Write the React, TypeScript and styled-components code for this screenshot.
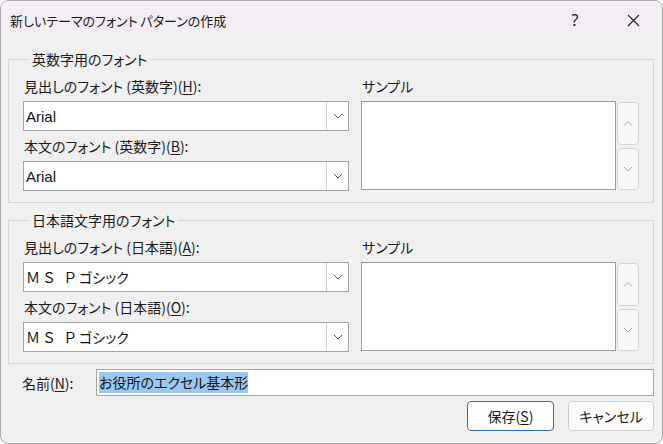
import React from 'react';
import styled, { createGlobalStyle } from 'styled-components';

const JP = '"Noto Sans CJK JP", "Noto Sans", sans-serif';

const GlobalStyle = createGlobalStyle`
	html, body {
		margin: 0;
		padding: 0;
		background: #ffffff;
	}
	body {
		font-family: ${JP};
		color: #1b1b1b;
	}
	* {
		box-sizing: border-box;
	}
`;

const Dialog = styled.div`
	width: 663px;
	height: 444px;
	display: flex;
	flex-direction: column;
	background: #f0f0f0;
	border: 1px solid #a9a9a9;
	border-radius: 8px;
	overflow: hidden;
	font-family: ${JP};
	font-feature-settings: "palt";
`;

const TitleBar = styled.div`
	height: 38px;
	flex: none;
	display: flex;
	align-items: center;
	padding-left: 9px;
	background: #f3eef4;
`;

const Title = styled.div`
	flex: 1;
	font-size: 13px;
	color: #1a1a1a;
`;

const TitleButton = styled.div`
	width: 58px;
	height: 38px;
	display: flex;
	align-items: center;
	justify-content: center;
	font-family: "Noto Sans", sans-serif;
	font-size: 16px;
	color: #222;
`;

const Body = styled.div`
	flex: 1;
	display: flex;
	flex-direction: column;
	padding: 10px 8px 0 7px;
`;

const Group = styled.fieldset<{ $gap?: number }>`
	margin: ${p => p.$gap || 0}px 0 0 0;
	padding: 7px 13px 11px 14px;
	border: 1px solid #d6d6d6;
	border-radius: 0;
	min-inline-size: auto;
`;

const Legend = styled.legend`
	margin-left: 6px;
	padding: 0 3px;
	font-size: 14px;
	line-height: 20px;
	height: 20px;
`;

const GroupGrid = styled.div`
	display: grid;
	grid-template-columns: 326px 278px;
	column-gap: 12px;
`;

const Column = styled.div`
	display: flex;
	flex-direction: column;
`;

const FieldLabel = styled.div<{ $top?: number }>`
	font-size: 14px;
	line-height: 20px;
	height: 20px;
	margin-top: ${p => p.$top || 0}px;
	margin-bottom: 5px;
	padding-left: 1px;
	white-space: nowrap;
`;

const Key = styled.span`
	text-decoration: underline;
	text-underline-offset: 2px;
	text-decoration-thickness: 1px;
`;

const Combo = styled.div`
	height: 30px;
	display: flex;
	align-items: stretch;
	background: #fff;
	border: 1px solid #a3a3a3;
`;

const ComboValue = styled.div<{ $latin?: boolean }>`
	flex: 1;
	display: flex;
	align-items: center;
	padding-left: 2px;
	font-family: ${p => (p.$latin ? '"Liberation Sans", Arial, sans-serif' : JP)};
	font-size: ${p => (p.$latin ? 15 : 14)}px;
	color: #111;
`;

const Wide = styled.span`
	font-feature-settings: normal;
	letter-spacing: 2px;
`;

const DropButton = styled.div`
	width: 22px;
	display: flex;
	align-items: center;
	justify-content: center;
	background: #fff;
	border-left: 1px solid #cfcfcf;
`;

const SampleRow = styled.div`
	display: flex;
	gap: 1px;
	height: 89px;
`;

const SampleBox = styled.div`
	width: 255px;
	height: 89px;
	background: #fff;
	border: 1px solid #9c9c9c;
`;

const Spin = styled.div`
	width: 22px;
	display: flex;
	flex-direction: column;
	gap: 3px;
	margin-top: 1px;
`;

const SpinButton = styled.div`
	flex: 1;
	display: flex;
	align-items: center;
	justify-content: center;
	background: #f7f7f7;
	border: 1px solid #d4d4d4;
	border-radius: 4px;
`;

const NameRow = styled.div`
	display: flex;
	align-items: center;
	margin-top: 5px;
	height: 27px;
`;

const NameLabel = styled.div`
	width: 88px;
	padding-left: 14px;
	font-size: 14px;
	white-space: nowrap;
`;

const NameInput = styled.div`
	flex: 1;
	height: 27px;
	display: flex;
	align-items: center;
	padding-left: 2px;
	background: #fff;
	border: 1px solid #a6a6a6;
	font-size: 14px;
`;

const Selected = styled.span`
	background: #99c9ef;
	line-height: 21px;
	color: #111;
`;

const Buttons = styled.div`
	display: flex;
	justify-content: flex-end;
	gap: 14px;
	margin-top: 5px;
`;

const Button = styled.div<{ $primary?: boolean; $w: number }>`
	width: ${p => p.$w}px;
	height: 30px;
	display: flex;
	align-items: center;
	justify-content: center;
	font-size: 14px;
	background: #fdfdfd;
	border: 1px solid ${p => (p.$primary ? '#2a6fb5' : '#d0d0d0')};
	border-radius: 4px;
	color: #1a1a1a;
`;

const Chevron = ({ up, color = '#5a5a5a' }: { up?: boolean; color?: string }) => (
	<svg width="10" height="6" viewBox="0 0 10 6">
		<path
			d={up ? 'M1 5.5 L5 1.5 L9 5.5' : 'M1 1 L5 5 L9 1'}
			fill="none"
			stroke={color}
			strokeWidth="1"
		/>
	</svg>
);

const CloseIcon = () => (
	<svg width="13" height="13" viewBox="0 0 13 13">
		<path d="M1 1 L12 12 M12 1 L1 12" stroke="#222" strokeWidth="1.1" />
	</svg>
);

type FontGroupProps = {
	title: string;
	gap?: number;
	headLabel: React.ReactNode;
	bodyLabel: React.ReactNode;
	headFont: React.ReactNode;
	bodyFont: React.ReactNode;
	latin?: boolean;
};

const FontGroup = ({ title, gap, headLabel, bodyLabel, headFont, bodyFont, latin }: FontGroupProps) => (
	<Group $gap={gap}>
		<Legend>{title}</Legend>
		<GroupGrid>
			<Column>
				<FieldLabel>{headLabel}</FieldLabel>
				<Combo>
					<ComboValue $latin={latin}>{headFont}</ComboValue>
					<DropButton><Chevron /></DropButton>
				</Combo>
				<FieldLabel $top={5}>{bodyLabel}</FieldLabel>
				<Combo>
					<ComboValue $latin={latin}>{bodyFont}</ComboValue>
					<DropButton><Chevron /></DropButton>
				</Combo>
			</Column>
			<Column>
				<FieldLabel>サンプル</FieldLabel>
				<SampleRow>
					<SampleBox />
					<Spin>
						<SpinButton><Chevron up color="#a8a8a8" /></SpinButton>
						<SpinButton><Chevron color="#a8a8a8" /></SpinButton>
					</Spin>
				</SampleRow>
			</Column>
		</GroupGrid>
	</Group>
);

const gothic = <><Wide>ＭＳ Ｐ</Wide>ゴシック</>;

const App = () => {
	return (
		<>
			<GlobalStyle />
			<Dialog>
				<TitleBar>
					<Title>新しいテーマのフォント パターンの作成</Title>
					<TitleButton>?</TitleButton>
					<TitleButton><CloseIcon /></TitleButton>
				</TitleBar>
				<Body>
					<FontGroup
						title="英数字用のフォント"
						latin
						headLabel={<>見出しのフォント (英数字)(<Key>H</Key>):</>}
						bodyLabel={<>本文のフォント (英数字)(<Key>B</Key>):</>}
						headFont="Arial"
						bodyFont="Arial"
					/>
					<FontGroup
						title="日本語文字用のフォント"
						gap={7}
						headLabel={<>見出しのフォント (日本語)(<Key>A</Key>):</>}
						bodyLabel={<>本文のフォント (日本語)(<Key>O</Key>):</>}
						headFont={gothic}
						bodyFont={gothic}
					/>
					<NameRow>
						<NameLabel>名前(<Key>N</Key>):</NameLabel>
						<NameInput><Selected>お役所のエクセル基本形</Selected></NameInput>
					</NameRow>
					<Buttons>
						<Button $primary $w={87}>保存(<Key>S</Key>)</Button>
						<Button $w={86}>キャンセル</Button>
					</Buttons>
				</Body>
			</Dialog>
		</>
	);
};

export default App;
